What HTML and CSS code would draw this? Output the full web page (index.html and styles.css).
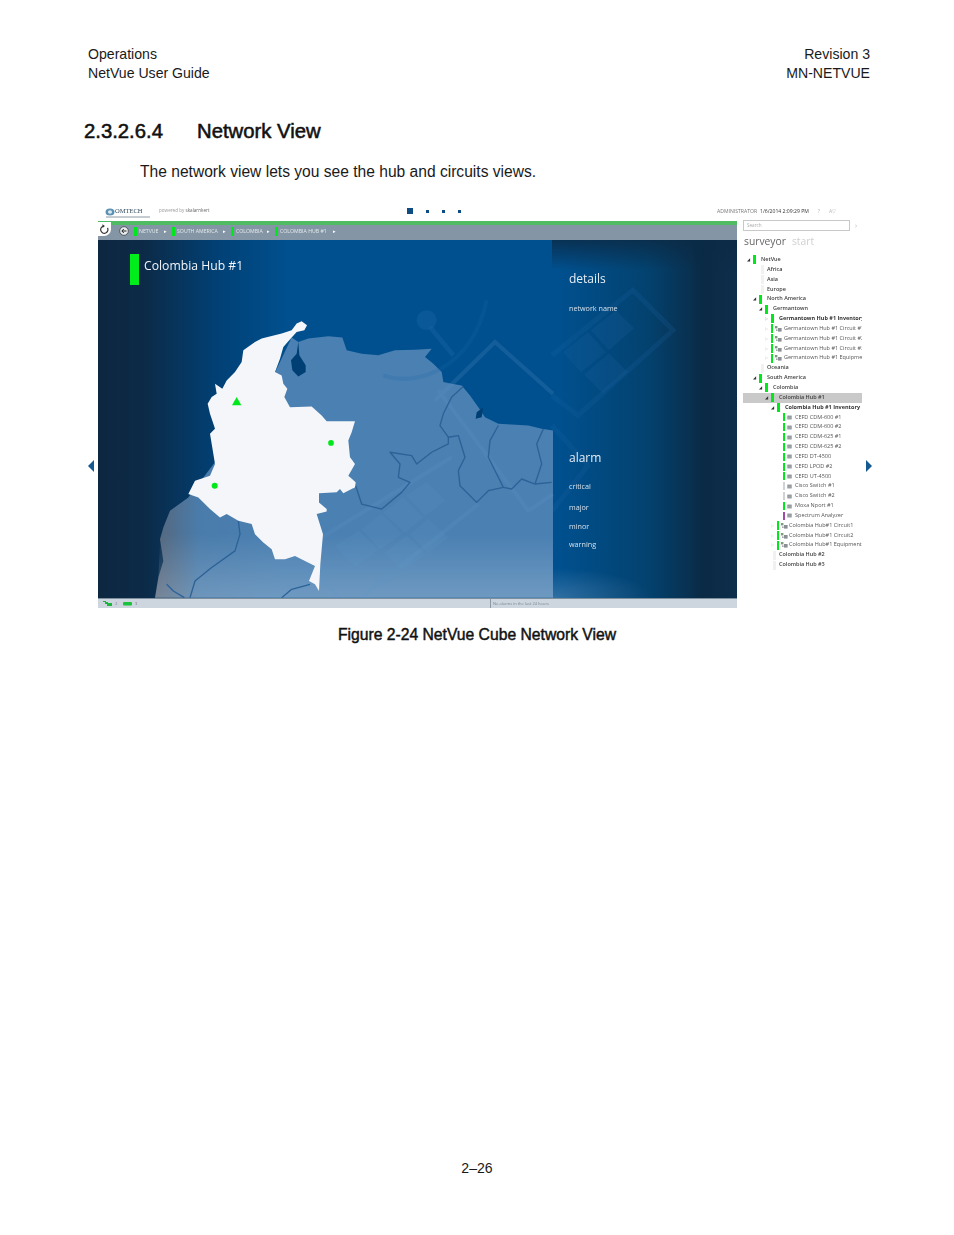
FILE: index.html
```html
<!DOCTYPE html>
<html lang="en">
<head>
<meta charset="utf-8">
<title>Network View</title>
<link rel="stylesheet" href="styles.css">
</head>
<body>
<main class="page">
  <header class="doc-head">
    <div>Operations<br>NetVue User Guide</div>
    <div class="right">Revision 3<br>MN-NETVUE</div>
  </header>
  <h1 class="section"><span class="num">2.3.2.6.4</span><span>Network View</span></h1>
  <p class="intro">The network view lets you see the hub and circuits views.</p>

  <figure class="figure">
    <svg class="side left" viewBox="0 0 6 12"><path d="M6 0V12L0 6Z"/></svg>
    <svg class="side right" viewBox="0 0 6 12"><path d="M0 0V12L6 6Z"/></svg>

    <div class="app-top">
      <div class="brand">
        <svg class="logo" viewBox="0 0 46 11">
          <ellipse cx="5" cy="5" rx="4.5" ry="3.6" fill="#5b93b5"/>
          <ellipse cx="5" cy="5" rx="2" ry="1.7" fill="#dfeaf0"/>
          <path d="M1 10H45" stroke="#8a9aa5" stroke-width="1"/>
        </svg>
        <span class="logo-text">OMTECH</span>
        <span class="powered">powered by <b>skalarnkert</b></span>
      </div>
      <div class="pager"><i class="big"></i><i></i><i></i><i></i></div>
      <div class="user">
        <span>ADMINISTRATOR</span><span class="time">1/6/2014 2:09:29 PM</span>
        <span class="q">?</span><span class="q">A▽</span>
      </div>
    </div>

    <div class="app-body">
      <section class="main">
        <div class="crumbs">
          <span class="refresh"><svg viewBox="0 0 12 12"><path d="M9.3 4.2A4 4 0 1 1 5 2.2" fill="none" stroke="#333" stroke-width="1.3"/><path d="M3.7 .4L6.4 2.3 3.9 4.3Z" fill="#333"/></svg></span>
          <span class="back"><svg viewBox="0 0 10 10"><circle cx="5" cy="5" r="4.3" fill="#e8ecef" stroke="#333" stroke-width=".7"/><path d="M7.5 5H3M4.8 3L2.8 5 4.8 7" fill="none" stroke="#222" stroke-width="1"/></svg></span>
          <span class="crumb c1">NETVUE</span><span class="tri">▸</span>
          <span class="crumb c2">SOUTH AMERICA</span><span class="tri">▸</span>
          <span class="crumb c3">COLOMBIA</span><span class="tri">▸</span>
          <span class="crumb c4">COLOMBIA HUB #1</span><span class="tri">▸</span>
        </div>

        <div class="stage">
          <svg class="map" viewBox="0 0 639 357" preserveAspectRatio="none">
            <defs>
              <linearGradient id="bg" x1="0" x2="1" y1="0" y2="0">
                <stop offset="0" stop-color="#0d2740"/>
                <stop offset=".07" stop-color="#0c2a47"/>
                <stop offset=".19" stop-color="#014176"/>
                <stop offset=".3" stop-color="#00508f"/>
                <stop offset=".72" stop-color="#00508f"/>
                <stop offset=".86" stop-color="#03426f"/>
                <stop offset=".95" stop-color="#0b2a45"/>
                <stop offset="1" stop-color="#0d2e4c"/>
              </linearGradient>
              <linearGradient id="land" gradientUnits="userSpaceOnUse" x1="180" y1="0" x2="560" y2="0">
                <stop offset="0" stop-color="#56667a"/>
                <stop offset=".35" stop-color="#4a7cab"/>
                <stop offset="1" stop-color="#4a80b2"/>
              </linearGradient>
              <linearGradient id="fade" x1="0" x2="0" y1="0" y2="1">
                <stop offset="0" stop-color="#fff" stop-opacity="0"/>
                <stop offset="1" stop-color="#fff" stop-opacity=".2"/>
              </linearGradient>
              <linearGradient id="topdark" x1="0" x2="0" y1="0" y2="1">
                <stop offset="0" stop-color="#0b2a45" stop-opacity=".8"/>
                <stop offset="1" stop-color="#0b2a45" stop-opacity="0"/>
              </linearGradient>
              <radialGradient id="glow" cx="0" cy="1" r="1">
                <stop offset="0" stop-color="#9fb8d0" stop-opacity=".3"/>
                <stop offset="1" stop-color="#9fb8d0" stop-opacity="0"/>
              </radialGradient>
            </defs>
            <rect width="639" height="357" fill="url(#bg)"/>
            <rect x="454" y="0" width="185" height="30" fill="url(#topdark)"/>
            <rect x="596" y="0" width="18" height="357" fill="#0a2a44" opacity=".3"/>
            <rect x="454" y="327" width="100" height="30" fill="url(#glow)"/>

            <!-- right panel watermark -->
            <g fill="none" stroke="#1d64a3" stroke-width="5" opacity=".2">
              <path d="M454 115L535 50 575 90 480 175 454 155"/>
              <path d="M454 185L490 225 454 270"/>
            </g>
            <g fill="#1a5f9c" opacity=".25">
              <path d="M465 112L490 92 508 112 483 132Z"/>
              <path d="M493 90L518 70 536 88 511 110Z"/>
              <path d="M486 134L511 113 530 132 505 153Z"/>
            </g>

            <g transform="translate(-3,60) scale(.33333)">
              <path fill="url(#land)" d="M590 112L610 125 640 115 700 108 742 112 755 150 800 160 850 165 900 150 960 148 1010 145 990 170 1015 190 1040 215 1045 245 1070 250 1100 255 1125 285 1150 320 1170 350 1210 370 1300 375 1340 385 1374 390V890H180L190 830 205 780 195 715 205 680 225 630 280 590 500 300Z"/>
              <path fill="url(#fade)" d="M180 890H1374V700H196L190 830Z"/>
              <!-- watermark -->
              <g fill="none" stroke="#5f97c6" stroke-width="12" opacity=".2">
                <path d="M680 710L1070 470"/>
                <path d="M800 890L1150 610"/>
                <path d="M1020 300L1200 125 1374 280"/>
                <path d="M1030 270L1300 630 1374 580"/>
                <path d="M680 830L730 890"/>
                <path d="M865 225C960 260 1130 210 1175 0" stroke="#1a64a6"/>
              </g>
              <g fill="#5f97c6" opacity=".18">
                <path d="M720 735L790 690 850 745 780 800Z"/>
                <path d="M800 685L860 640 920 700 855 745Z"/>
                <path d="M865 635L925 590 985 650 930 695Z"/>
                <path d="M935 585L995 545 1050 600 990 645Z"/>
                <path d="M870 755L935 705 990 760 925 810Z"/>
                <path d="M945 700L1000 655 1060 710 1000 755Z"/>
              </g>
              <circle cx="995" cy="60" r="30" fill="#1a64a6" opacity=".4"/>
              <path d="M1005 80L1075 165" stroke="#1a64a6" stroke-width="14" opacity=".4"/>
              <!-- Lake Maracaibo -->
              <path fill="#003f73" d="M610 125L613 165 632 195 632 215 610 228 592 210 588 180 605 160Z"/>
              <path fill="#003f73" d="M1145 335L1165 320 1160 350 1142 355Z"/>
              <!-- borders -->
              <g fill="none" stroke="#2c6297" stroke-width="4" stroke-linejoin="round">
                <path d="M1105 258L1070 290 1045 340 1035 375 1060 410 1060 430 1010 455 965 490 950 465 885 455 915 490 910 530 945 545 920 575 860 625 800 610 782 555"/>
                <path d="M1060 410L1090 405 1110 470 1090 510 1095 555 1145 605 1180 570 1225 560 1180 470 1185 420 1210 375"/>
                <path d="M1225 560L1250 565 1280 535 1320 550 1370 545"/>
                <path d="M1345 385L1325 430 1340 490 1320 550"/>
                <path d="M430 660L435 700 420 750 350 800 300 840 285 890"/>
                <path d="M215 850L235 870 268 890"/>
                <path d="M560 890L590 865 645 850"/>
              </g>
              <!-- Colombia -->
              <path fill="#f4f6f9" d="M620 63L636 75 628 90 605 95 590 112 565 140 555 175 540 215 560 225 565 250 577 265 568 290 585 320 650 318 680 345 695 362 780 362 770 395 760 420 765 470 780 490 760 525 782 545 780 560 745 578 735 565 725 575 672 578 672 605 695 625 695 632 665 640 684 700 676 790 672 870 660 850 642 840 660 795 600 765 570 775 540 775 530 745 505 725 480 700 470 670 430 660 395 640 375 650 345 625 310 590 280 580 300 540 345 525 360 490 345 400 360 385 345 340 338 310 350 290 365 280 360 250 382 265 395 240 420 215 440 185 445 150 480 125 500 115 560 100 590 90 605 70Z"/>
              <path fill="#00e81c" d="M425 290L439 314H411Z"/>
              <circle cx="708" cy="427" r="8.5" fill="#00e81c"/>
              <circle cx="359" cy="555" r="9" fill="#00e81c"/>
            </g>
          </svg>

          <div class="stage-left">
            <i class="hub-bar"></i>
            <h2 class="hub-title">Colombia Hub #1</h2>
          </div>
          <div class="stage-right">
            <h3 class="panel-head">details</h3>
            <div class="panel-item name">network name</div>
            <h3 class="panel-head alarm">alarm</h3>
            <ul class="alarm-list">
              <li>critical</li><li>major</li><li>minor</li><li>warning</li>
            </ul>
          </div>
        </div>

        <div class="status">
          <div class="counts">
            <svg viewBox="0 0 10 5"><path d="M0 0H3V1H5V2H9V5H4V3H2V1H0Z" fill="#19b83a"/></svg><span>2</span>
            <svg viewBox="0 0 10 5"><rect y="1" width="9" height="3.4" rx="1" fill="#19c43c"/></svg><span>3</span>
          </div>
          <div class="status-msg">No alarms in the last 24 hours</div>
        </div>
      </section>

      <aside class="side-panel">
        <div class="search-row"><div class="search">Search</div><span class="go">›</span></div>
        <div class="tabs"><span class="on">surveyor</span><span class="off">start</span></div>
        <ul class="tree">
          <li class="l0 b"><s>◢</s><i class="g"></i>NetVue</li>
          <li class="l1 b plain"><i class="f"></i>Africa</li>
          <li class="l1 b plain"><i class="f"></i>Asia</li>
          <li class="l1 b plain"><i class="f"></i>Europe</li>
          <li class="l1 b"><s>◢</s><i class="g"></i>North America</li>
          <li class="l2 b"><s>◢</s><i class="g"></i>Germantown</li>
          <li class="l3 bb"><s class="o">▷</s><i class="g"></i>Germantown Hub #1 Inventory</li>
          <li class="l3 ic"><s class="o">▷</s><i class="g"></i><svg viewBox="0 0 7 6"><use href="#hub"/></svg>Germantown Hub #1 Circuit #1</li>
          <li class="l3 ic"><s class="o">▷</s><i class="g"></i><svg viewBox="0 0 7 6"><use href="#hub"/></svg>Germantown Hub #1 Circuit #2</li>
          <li class="l3 ic"><s class="o">▷</s><i class="g"></i><svg viewBox="0 0 7 6"><use href="#hub"/></svg>Germantown Hub #1 Circuit #3</li>
          <li class="l3 ic"><s class="o">▷</s><i class="g"></i><svg viewBox="0 0 7 6"><use href="#hub"/></svg>Germantown Hub #1 Equipment</li>
          <li class="l1 b plain"><i class="f"></i>Oceania</li>
          <li class="l1 b"><s>◢</s><i class="g"></i>South America</li>
          <li class="l2 b"><s>◢</s><i class="g"></i>Colombia</li>
          <li class="l3 b sel"><s>◢</s><i class="g"></i>Colombia Hub #1</li>
          <li class="l4 bb"><s>◢</s><i class="g"></i>Colombia Hub #1 Inventory</li>
          <li class="dev"><i class="g"></i><svg viewBox="0 0 5 5"><use href="#dev"/></svg>CEFD CDM-600 #1</li>
          <li class="dev"><i class="g"></i><svg viewBox="0 0 5 5"><use href="#dev"/></svg>CEFD CDM-600 #2</li>
          <li class="dev"><i class="g"></i><svg viewBox="0 0 5 5"><use href="#dev"/></svg>CEFD CDM-625 #1</li>
          <li class="dev"><i class="g"></i><svg viewBox="0 0 5 5"><use href="#dev"/></svg>CEFD CDM-625 #2</li>
          <li class="dev"><i class="g"></i><svg viewBox="0 0 5 5"><use href="#dev"/></svg>CEFD DT-4500</li>
          <li class="dev"><i class="g"></i><svg viewBox="0 0 5 5"><use href="#dev"/></svg>CEFD LPOD #2</li>
          <li class="dev"><i class="g"></i><svg viewBox="0 0 5 5"><use href="#dev"/></svg>CEFD UT-4500</li>
          <li class="dev"><i class="y"></i><svg viewBox="0 0 5 5"><use href="#dev"/></svg>Cisco Switch #1</li>
          <li class="dev"><i class="y"></i><svg viewBox="0 0 5 5"><use href="#dev"/></svg>Cisco Switch #2</li>
          <li class="dev"><i class="g"></i><svg viewBox="0 0 5 5"><use href="#dev"/></svg>Moxa Nport #1</li>
          <li class="dev"><i class="p"></i><svg viewBox="0 0 5 5"><use href="#dev"/></svg>Spectrum Analyzer</li>
          <li class="l4 ic"><s class="o">▷</s><i class="g"></i><svg viewBox="0 0 7 6"><use href="#hub"/></svg>Colombia Hub#1 Circuit1</li>
          <li class="l4 ic"><s class="o">▷</s><i class="g"></i><svg viewBox="0 0 7 6"><use href="#hub"/></svg>Colombia Hub#1 Circuit2</li>
          <li class="l4 ic"><s class="o">▷</s><i class="g"></i><svg viewBox="0 0 7 6"><use href="#hub"/></svg>Colombia Hub#1 Equipment</li>
          <li class="l3 b plain wide"><i class="f"></i>Colombia Hub #2</li>
          <li class="l3 b plain wide"><i class="f"></i>Colombia Hub #3</li>
        </ul>
        <svg class="defs" width="0" height="0">
          <symbol id="hub" viewBox="0 0 7 6"><rect x="0" y="0" width="2.4" height="2.4" fill="#7d9a7d"/><rect x="3" y="2" width="3.6" height="3.6" fill="#8a8f94"/><rect x="1" y="3.4" width="1.6" height="1.6" fill="#a0a5a9"/></symbol>
          <symbol id="dev" viewBox="0 0 5 5"><rect x=".3" y=".6" width="4.4" height="3.8" fill="#83898e"/><path d="M.3 2H4.7M.3 3.2H4.7" stroke="#d5d8da" stroke-width=".4"/></symbol>
        </svg>
      </aside>
    </div>
  </figure>

  <figcaption class="caption">Figure 2-24 NetVue Cube Network View</figcaption>
  <footer class="folio">2–26</footer>
</main>
</body>
</html>
```

FILE: styles.css
```css
* { box-sizing: border-box; }
html, body { margin: 0; padding: 0; background: #fff; }
body { font-family: "Liberation Sans", Arial, sans-serif; color: #1a1a1a; }
.page { width: 954px; height: 1235px; display: flex; flex-direction: column; overflow: hidden; }

.doc-head { display: flex; justify-content: space-between; padding: 45px 84px 0 88px; font-size: 14.1px; line-height: 18.5px; }
.doc-head .right { text-align: right; }

.section { margin: 37px 0 0 84px; font-size: 20.3px; line-height: 24px; font-weight: 400; -webkit-text-stroke: .55px #111; display: flex; color: #111; }
.section .num { width: 113px; }

.intro { margin: 19px 0 0 140px; font-size: 15.6px; line-height: 20px; }

.figure { position: relative; margin: 23px 0 0 98px; width: 764px; filter: blur(.5px); }
.side { position: absolute; top: 255px; width: 6px; height: 12px; fill: #14598f; }
.side.left { left: -10px; }
.side.right { left: 768px; }

.app-top { height: 16px; width: 764px; position: relative; display: flex; align-items: center; padding-bottom: 4px; font-family: "Open Sans", sans-serif; }
.brand { display: flex; align-items: center; padding-left: 7px; width: 309px; position: relative; flex: none; }
.logo { width: 46px; height: 11px; flex: none; margin-top: 3px; }
.logo-text { position: absolute; left: 17px; top: 3px; font-size: 6.5px; line-height: 8px; color: #2f4a5c; font-family: "Liberation Serif", serif; }
.powered { font-size: 4.6px; color: #999; margin: -2px 0 0 8px; }
.powered b { color: #666; font-weight: 400; }
.pager { display: flex; align-items: center; gap: 13px; width: 310px; flex: none; }
.pager i { display: block; width: 3px; height: 3px; background: #0f4c81; }
.pager i.big { width: 6px; height: 6px; }
.user { display: flex; align-items: center; font-size: 5.1px; color: #777; white-space: nowrap; }
.user .time { margin-left: 3px; color: #333; }
.user .q { margin-left: 9px; color: #b5b5b5; }

.app-body { display: flex; gap: 6px; }
.main { width: 639px; flex: none; }

.crumbs { height: 19px; border-top: 4px solid #4fbb62; padding-bottom: 3px; background: #8496a5; display: flex; align-items: center; position: relative; font-family: "Open Sans", sans-serif; font-size: 5.2px; color: #e4e8ec; white-space: nowrap; }
.refresh { position: absolute; left: 0; top: -3px; width: 13px; height: 14px; background: #fff; border-radius: 0 0 7px 0; display: flex; align-items: center; justify-content: center; }
.refresh svg { width: 11px; height: 11px; }
.back { margin-left: 21px; width: 10px; height: 10px; display: block; }
.back svg { display: block; width: 10px; height: 10px; }
.crumb { border-left: 3px solid #00e81c; padding-left: 2px; line-height: 9px; }
.c1 { margin-left: 5px; width: 30px; }
.c2 { margin-left: 5px; width: 51px; }
.c3 { margin-left: 5px; width: 36px; }
.c4 { margin-left: 5px; width: 58px; }
.tri { font-size: 5px; color: #fff; width: 3px; }

.stage { position: relative; height: 358px; width: 639px; display: grid; grid-template-columns: 454px 185px; color: #fff; font-family: "Open Sans", sans-serif; }
.map { position: absolute; inset: 0; width: 639px; height: 358px; display: block; }
.stage-left, .stage-right { position: relative; }
.stage-left { display: flex; align-items: flex-start; padding: 14px 0 0 32px; gap: 5px; }
.hub-bar { display: block; width: 9px; height: 31px; background: #00ee1c; }
.hub-title { margin: 3px 0 0; font-size: 12.2px; line-height: 17px; font-weight: 400; color: #f2f6fa; }
.stage-right { padding: 30px 0 0 17px; }
.panel-head { margin: 0; font-size: 12px; line-height: 18px; font-weight: 400; color: #e6eef5; }
.panel-item { font-size: 7.2px; line-height: 10px; color: #d5e0ea; }
.panel-item.name { margin-top: 15px; }
.panel-head.alarm { margin-top: 136px; }
.alarm-list { list-style: none; margin: 14px 0 0; padding: 0; font-size: 7.2px; line-height: 10px; color: #d5e0ea; display: grid; row-gap: 8px; }
.alarm-list li:nth-child(2) { margin-top: 3px; }
.alarm-list li:nth-child(3) { margin-top: 1px; }

.status { height: 10px; background: #cdd6de; display: flex; align-items: center; font-family: "Open Sans", sans-serif; font-size: 4px; color: #556; border-top: 1px solid #7d8e9c; }
.counts { width: 392px; padding-left: 5px; display: flex; align-items: center; gap: 2px; color: #778; }
.counts svg { width: 10px; height: 5px; }
.counts span { width: 6px; }
.status-msg { border-left: 1px solid #8c99a4; padding-left: 2px; line-height: 9px; color: #7b8792; white-space: nowrap; }

.side-panel { width: 119px; margin-top: -1px; font-family: "Open Sans", sans-serif; overflow: hidden; }
.search-row { display: flex; align-items: center; gap: 5px; }
.search { width: 107px; height: 11px; border: 1px solid #c8c8c8; font-size: 4.6px; line-height: 9px; padding-left: 3px; color: #aaa; }
.go { color: #bbb; font-size: 7px; line-height: 9px; }
.tabs { margin: 3px 0 0 1px; height: 15px; font-size: 10.3px; line-height: 15px; display: flex; gap: 6px; }
.tabs .on { color: #666; }
.tabs .off { color: #d0d0d0; }

.tree { list-style: none; margin: 6px 0 0; padding: 0; font-size: 5.5px; color: #555; }
.tree li { height: 9.85px; line-height: 9.85px; display: flex; align-items: center; white-space: nowrap; overflow: hidden; }
.tree s { text-decoration: none; width: 6px; flex: none; font-size: 3.6px; color: #333; }
.tree s.o { color: #c2c2c2; }
.tree i { display: block; flex: none; width: 3px; height: 9px; margin-right: 5px; }
.tree i.g { background: #00e81c; }
.tree i.y { background: #cfd3d6; width: 1.5px; margin-right: 2.5px; height: 8px; }
.tree i.p { background: #a24aa8; width: 2px; margin-right: 2px; height: 8px; }
.tree i.f { background: #f1f1f1; width: 3px; margin-right: 3px; }
.tree svg { width: 7px; height: 6px; flex: none; margin: 0 2px 0 -4px; }
.tree .ic i.g { width: 1.5px; margin-right: 6.5px; }
.tree .b { color: #3d3d3d; font-weight: 600; }
.tree .bb { color: #333; font-weight: 700; }
.l0 { padding-left: 4px; }
.l1 { padding-left: 10px; }
.l1.plain { padding-left: 18px; }
.l2 { padding-left: 16px; }
.l3 { padding-left: 22px; }
.l3.wide { padding-left: 30px; }
.l4 { padding-left: 28px; }
.l4.ic svg { margin-right: 1px; }
.sel { background: #c9c9c9; }
.tree li.dev { padding-left: 40px; }
.dev i.g { width: 2px; margin-right: 2px; height: 8px; }
.tree .dev svg { width: 5px; height: 5px; margin: 0 3px 0 0; }
.defs { position: absolute; }

.caption { margin: 17px 0 0; text-align: center; font-size: 15.7px; line-height: 20px; font-weight: 400; -webkit-text-stroke: .45px #111; color: #111; }
.folio { margin-top: 514px; text-align: center; font-size: 14.1px; line-height: 18px; }
```
